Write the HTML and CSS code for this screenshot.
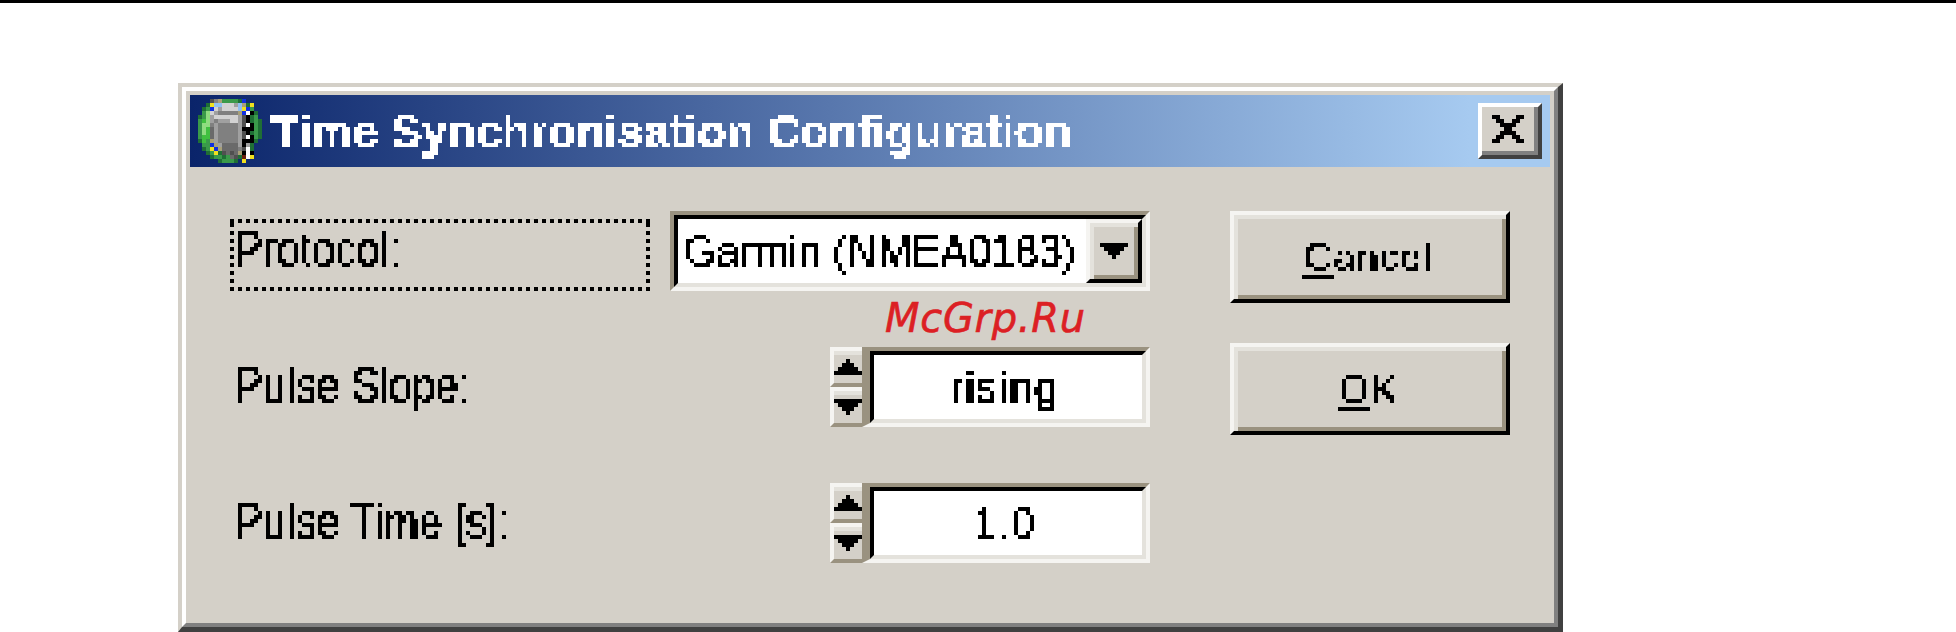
FILE: index.html
```html
<!DOCTYPE html>
<html lang="en">
<head>
<meta charset="utf-8">
<title>Time Synchronisation Configuration</title>
<link rel="stylesheet" href="styles.css">
</head>
<body>
<div class="rule"></div>
<div class="window">
  <div class="window-inner">
    <div class="window-body">
      <header class="titlebar">
        <svg class="app-icon" viewBox="0 0 16 16" width="64" height="64" shape-rendering="crispEdges" fill="none" stroke-width="1">
          <path stroke="#1f6f35" d="M10 .5h1M2 1.5h1M12 1.5h1M1 2.5h1M14 3.5h1M0 4.5h1M13 4.5h1M13 5.5h1M15 5.5h1M15 6.5h1M15 7.5h1M13 8.5h1M15 8.5h1M15 9.5h1M0 10.5h1M14 10.5h1M13 11.5h1M1 12.5h1M13 12.5h1M2 13.5h1M5 13.5h1M3 14.5h1M6 14.5h1M10 14.5h1M5 15.5h1M9 15.5h1"/>
          <path stroke="#3a9a4a" d="M6 .5h4M2 2.5h1M13 2.5h1M1 3.5h1M1 4.5h1M14 4.5h1M0 5.5h1M14 5.5h1M0 6.5h1M14 6.5h1M0 7.5h1M14 7.5h1M0 8.5h1M14 8.5h1M0 9.5h1M14 9.5h1M2 10.5h1M1 11.5h2M2 12.5h1M3 13.5h1M4 14.5h2M7 14.5h1M6 15.5h3"/>
          <path stroke="#8fdc80" d="M2 3.5h1M2 4.5h1M2 5.5h1M1 6.5h2M1 7.5h1M1 8.5h1"/>
          <path stroke="#40c040" d="M1 5.5h1M2 7.5h1M2 8.5h1M1 9.5h2M1 10.5h1"/>
          <path stroke="#505050" d="M3 .5h1M11 4.5h1M11 5.5h1M11 6.5h1M11 8.5h1M11 9.5h1M11 12.5h1M6 13.5h1M8 13.5h1M9 14.5h1"/>
          <path stroke="#808080" d="M4 .5h1M5 3.5h5M4 5.5h1M3 6.5h1M5 6.5h5M5 7.5h5M5 8.5h5M5 9.5h5M5 10.5h5M10 12.5h1"/>
          <path stroke="#6a6a6a" d="M3 7.5h1M3 8.5h1M3 9.5h1M6 11.5h4M6 12.5h4M7 13.5h1M9 13.5h1M8 14.5h1"/>
          <path stroke="#a0a0a0" d="M9 1.5h1M5 2.5h1M4 3.5h1M3 4.5h1M10 4.5h1M3 5.5h1M5 5.5h3M10 5.5h1M4 6.5h1M10 6.5h1M4 7.5h1M10 7.5h1M4 8.5h1M10 8.5h1M4 9.5h1M10 9.5h1M4 10.5h1M10 10.5h1M5 11.5h1M10 11.5h1M12 11.5h1"/>
          <path stroke="#d2d2d2" d="M6 1.5h3M4 2.5h1M6 2.5h4M3 3.5h1M4 4.5h6M8 5.5h2"/>
          <path stroke="#a8a078" d="M5 .5h1M11 1.5h1M10 3.5h1M3 10.5h1M4 11.5h1M5 12.5h1M10 13.5h1"/>
          <path stroke="#90c0f0" d="M4 1.5h2M10 1.5h1M10 2.5h1"/>
          <path stroke="#1030e0" d="M11 .5h1M3 2.5h1M12 2.5h1M11 3.5h1M3 11.5h1M4 12.5h1"/>
          <path stroke="#f0e020" d="M3 1.5h1M13 1.5h1M11 2.5h1M3 12.5h1M4 13.5h1M13 14.5h1M11 15.5h1"/>
          <path stroke="#ffffff" d="M12 3.5h1M12 6.5h1M12 9.5h1M12 12.5h1M12 13.5h1M12 14.5h1"/>
          <path stroke="#000000" d="M13 3.5h1M12 4.5h1M12 5.5h1M13 6.5h1M11 7.5h3M12 8.5h1M13 9.5h1M11 10.5h3M11 11.5h1M11 13.5h1M13 13.5h1"/>
          <path stroke="#6a2010" d="M11 14.5h1"/>
        </svg>
        <h1 class="title px">Time Synchronisation Configuration</h1>
        <button class="close" type="button" aria-label="Close">
          <svg viewBox="0 0 8 7" width="32" height="28" shape-rendering="crispEdges"><path d="M0 0h2v1h1v1h2V1h1V0h2v1H7v1H6v1H5v1h1v1h1v1h1v1H6V6H5V5H3v1H2v1H0V6h1V5h1V4h1V3H2V2H1V1H0z"/></svg>
        </button>
      </header>
      <div class="content">
        <div class="fields">
          <div class="row">
            <label class="label label-focus"><span class="px label-text"><span class="tall">Protocol:</span></span></label>
            <div class="combo">
              <div class="well combo-well">
                <span class="px value-box value-left"><span class="value">Garmin (NMEA0183)</span></span>
                <span class="combo-btn">
                  <svg viewBox="0 0 7 4" width="28" height="16" shape-rendering="crispEdges"><path d="M0 0h7v1H6v1H5v1H4v1H3V3H2V2H1V1H0z"/></svg>
                </span>
              </div>
            </div>
          </div>
          <div class="row">
            <label class="label"><span class="px label-text"><span class="tall">Pulse Slope:</span></span></label>
            <div class="spin">
              <div class="spin-btns">
                <span class="spin-btn"><svg viewBox="0 0 7 4" width="28" height="16" shape-rendering="crispEdges"><path d="M3 0h1v1h1v1h1v1h1v1H0V3h1V2h1V1h1z"/></svg></span>
                <span class="spin-btn"><svg viewBox="0 0 7 4" width="28" height="16" shape-rendering="crispEdges"><path d="M0 0h7v1H6v1H5v1H4v1H3V3H2V2H1V1H0z"/></svg></span>
              </div>
              <div class="spin-field">
                <div class="well spin-well"><span class="px value-box"><span class="value">rising</span></span></div>
              </div>
            </div>
          </div>
          <div class="row">
            <label class="label"><span class="px label-text"><span class="tall">Pulse Time [s]:</span></span></label>
            <div class="spin">
              <div class="spin-btns">
                <span class="spin-btn"><svg viewBox="0 0 7 4" width="28" height="16" shape-rendering="crispEdges"><path d="M3 0h1v1h1v1h1v1h1v1H0V3h1V2h1V1h1z"/></svg></span>
                <span class="spin-btn"><svg viewBox="0 0 7 4" width="28" height="16" shape-rendering="crispEdges"><path d="M0 0h7v1H6v1H5v1H4v1H3V3H2V2H1V1H0z"/></svg></span>
              </div>
              <div class="spin-field">
                <div class="well spin-well"><span class="px value-box"><span class="value">1.0</span></span></div>
              </div>
            </div>
          </div>
        </div>
        <div class="actions">
          <button class="btn" type="button"><span class="px btn-text"><span class="key">C</span>ancel</span></button>
          <button class="btn" type="button"><span class="px btn-text"><span class="key">O</span>K</span></button>
        </div>
        <div class="watermark">McGrp.Ru</div>
      </div>
    </div>
  </div>
</div>
<svg class="filter-defs" width="0" height="0" aria-hidden="true">
  <filter id="pixel" x="0" y="0" width="100%" height="100%" color-interpolation-filters="sRGB">
    <feFlood x="1" y="1" width="1" height="1" flood-color="#000"/>
    <feComposite width="4" height="4"/>
    <feTile result="grid"/>
    <feComposite in="SourceGraphic" in2="grid" operator="in"/>
    <feComponentTransfer result="hard">
      <feFuncA type="discrete" tableValues="0 1 1 1 1 1 1 1"/>
    </feComponentTransfer>
    <feMorphology in="hard" operator="dilate" radius="1" result="a"/>
    <feOffset in="a" dx="1" dy="0" result="b"/>
    <feOffset in="a" dx="0" dy="1" result="c"/>
    <feOffset in="a" dx="1" dy="1" result="d"/>
    <feMerge>
      <feMergeNode in="a"/>
      <feMergeNode in="b"/>
      <feMergeNode in="c"/>
      <feMergeNode in="d"/>
    </feMerge>
  </filter>
</svg>
</body>
</html>
```

FILE: styles.css
```css
:root {
  --face: #d4d0c8;
  --hi: #f5f4f1;
  --hi2: #e4e2dc;
  --lo: #9a9280;
}
* { box-sizing: border-box; }
html, body { margin: 0; padding: 0; background: #fff; }
body {
  width: 1956px;
  height: 632px;
  overflow: hidden;
  font-family: "Liberation Sans", Arial, sans-serif;
  color: #000;
}
.rule { height: 3px; background: #000; }
.filter-defs { display: block; }
.px { filter: url(#pixel); }

.window {
  margin: 80px 0 0 178px;
  width: 1385px;
  height: 549px;
  border-style: solid;
  border-width: 4px 5px 5px 4px;
  border-color: var(--face) #404040 #404040 var(--face);
}
.window-inner {
  height: 100%;
  border-style: solid;
  border-width: 4px;
  border-color: #fff #808080 #808080 #fff;
}
.window-body {
  height: 100%;
  background: var(--face);
  padding: 4px;
}

.titlebar {
  display: flex;
  align-items: center;
  height: 72px;
  padding: 0 8px;
  background: linear-gradient(90deg, #0a246a 0, #a6caf0 1280px);
}
.app-icon { flex: none; margin-right: 8px; }
.title {
  margin: 0;
  flex: 1;
  font-size: 46.4px;
  font-weight: 700;
  line-height: 72px;
  color: #fff;
  white-space: nowrap;
}
.close {
  flex: none;
  display: flex;
  align-items: center;
  justify-content: center;
  width: 64px;
  height: 56px;
  padding: 0;
  border-style: solid;
  border-width: 4px;
  border-color: #fff #404040 #404040 #fff;
  background: var(--face);
  box-shadow: inset -4px -4px 0 #808080;
}
.close svg { display: block; margin: -4px 0 0 -4px; }

.content {
  position: relative;
  display: flex;
  gap: 80px;
  padding: 44px 0 0 40px;
}
.fields {
  display: flex;
  flex-direction: column;
  gap: 56px;
  width: 920px;
}
.row {
  display: flex;
  justify-content: space-between;
  height: 80px;
}
.label {
  display: block;
  width: 420px;
  font-size: 40.6px;
  letter-spacing: .6px;
  white-space: nowrap;
}
.label-text {
  display: flex;
  align-items: center;
  height: 100%;
  padding: 0 0 4px 5px;
}
.tall {
  display: inline-block;
  transform: scaleY(1.24);
}
.label-focus {
  height: 72px;
  margin-top: 8px;
  background:
    repeating-linear-gradient(90deg, #000 0 4px, transparent 4px 8px) 0 0 / 100% 4px no-repeat,
    repeating-linear-gradient(90deg, #000 0 4px, transparent 4px 8px) 0 100% / 100% 4px no-repeat,
    repeating-linear-gradient(0deg, #000 0 4px, transparent 4px 8px) 0 0 / 4px 100% no-repeat,
    repeating-linear-gradient(0deg, #000 0 4px, transparent 4px 8px) 100% 0 / 4px 100% no-repeat;
}
.label-focus .label-text { padding-bottom: 12px; }

.combo, .spin-field {
  border-style: solid;
  border-color: var(--lo) var(--hi) var(--hi) var(--lo);
}
.combo {
  width: 480px;
  height: 80px;
  border-width: 4px;
}
.well {
  display: flex;
  height: 100%;
  border-style: solid;
  border-width: 4px;
  border-color: #000 var(--hi2) var(--hi2) #000;
  background: #fff;
}
.value-box {
  flex: 1;
  display: flex;
  justify-content: center;
  height: 64px;
  padding-right: 8px;
}
.spin-well .value { letter-spacing: 1.4px; }
.value-left { justify-content: flex-start; padding: 0 0 0 5px; }
.value {
  display: inline-block;
  font-size: 42px;
  line-height: 64px;
  white-space: nowrap;
  transform: scaleY(1.07);
}
.combo-btn {
  flex: none;
  display: flex;
  align-items: flex-start;
  justify-content: center;
  width: 56px;
  height: 64px;
  padding: 20px 0 0 0;
  border-style: solid;
  border-width: 4px;
  border-color: var(--hi) #000 #000 var(--hi);
  background: var(--face);
  box-shadow: inset 4px 4px 0 var(--hi2), inset -4px -4px 0 var(--lo);
}
.combo-btn svg { display: block; }

.spin {
  display: flex;
  width: 320px;
  height: 80px;
}
.spin-btns {
  flex: none;
  display: flex;
  flex-direction: column;
  width: 32px;
}
.spin-btn {
  display: block;
  height: 40px;
  padding-top: 8px;
  border-style: solid;
  border-width: 4px 0 4px 4px;
  border-color: var(--hi) transparent var(--lo) var(--hi);
  background: var(--face) padding-box;
  box-shadow: inset 0 4px 0 var(--hi2);
}
.spin-btn svg { display: block; }
.spin-field {
  flex: 1;
  border-width: 4px 4px 4px 8px;
}
.spin-well { justify-content: center; }

.actions {
  display: flex;
  flex-direction: column;
  gap: 40px;
  width: 280px;
}
.btn {
  display: block;
  width: 280px;
  height: 92px;
  padding: 0;
  border-style: solid;
  border-width: 4px;
  border-color: var(--hi) #000 #000 var(--hi);
  background: var(--face);
  box-shadow: inset 4px 4px 0 var(--hi2), inset -4px -4px 0 var(--lo);
  font-family: inherit;
  font-size: 39px;
  letter-spacing: 1.2px;
  color: #000;
}
.btn-text {
  display: flex;
  align-items: center;
  justify-content: center;
  height: 84px;
  padding-right: 4px;
}
.key {
  text-decoration: underline;
  text-decoration-thickness: 4px;
  text-underline-offset: 5px;
  text-decoration-skip-ink: none;
}

.watermark {
  position: absolute;
  left: 695px;
  top: 128px;
  font-family: "DejaVu Sans", sans-serif;
  font-style: italic;
  font-size: 40px;
  letter-spacing: .7px;
  -webkit-text-stroke: .6px #dc2024;
  color: #dc2024;
  white-space: nowrap;
}
```
